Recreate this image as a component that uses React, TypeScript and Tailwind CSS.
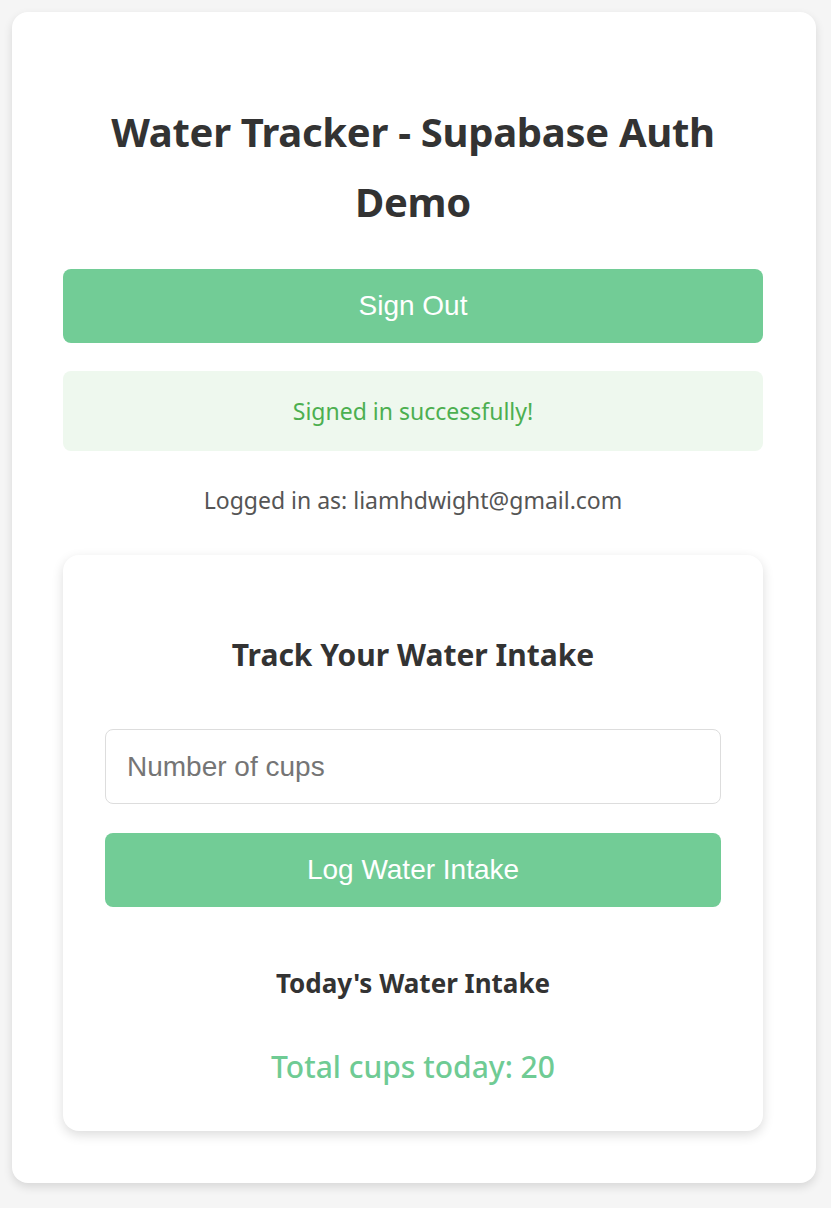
export default function App() {
  const seg = { fontFamily: '"Noto Sans", "Open Sans", sans-serif' };
  const arial = { fontFamily: '"Liberation Sans", Arial, sans-serif' };
  return (
    <div className="min-h-[1208px] bg-[#f5f5f5] p-3" style={seg}>
      <div className="w-[804px] rounded-2xl bg-white pl-[51px] pr-[53px] pt-[85px] pb-[52px] shadow-[0_4px_10px_rgba(0,0,0,0.12)]">
        <h1 className="text-center text-[40px] font-bold leading-[70px] text-[#333] tracking-[-0.3px]">
          Water Tracker - Supabase Auth Demo
        </h1>
        <button
          className="mt-[32px] h-[74px] w-full rounded-lg bg-[#72cc96] text-[28px] text-white"
          style={arial}
        >
          Sign Out
        </button>
        <div className="mt-[28px] flex h-[80px] items-center justify-center rounded-lg bg-[#eef8ee] text-[23px] text-[#4caf50]">
          Signed in successfully!
        </div>
        <p className="mt-[32px] text-center text-[23px] leading-[34px] text-[#555]">
          Logged in as: liamhdwight@gmail.com
        </p>
        <div className="mt-[38px] rounded-2xl bg-white px-[42px] pt-[78px] pb-[42px] shadow-[0_4px_12px_rgba(0,0,0,0.14)]">
          <h2 className="text-center text-[30px] font-bold leading-[44px] text-[#333]">
            Track Your Water Intake
          </h2>
          <input
            type="number"
            placeholder="Number of cups"
            className="mt-[52px] block h-[75px] w-full rounded-lg border border-[#ddd] px-[21px] text-[28px] text-[#333] placeholder:text-[#757575] outline-none"
            style={arial}
          />
          <button
            className="mt-[29px] h-[74px] w-full rounded-lg bg-[#72cc96] text-[28px] text-white"
            style={arial}
          >
            Log Water Intake
          </button>
          <h3 className="mt-[58px] text-center text-[26px] font-bold leading-[36px] text-[#333]">
            Today&apos;s Water Intake
          </h3>
          <p className="mt-[44px] text-center text-[30px] font-medium leading-[44px] text-[#6fcb94]">
            Total cups today: 20
          </p>
        </div>
      </div>
    </div>
  );
}
